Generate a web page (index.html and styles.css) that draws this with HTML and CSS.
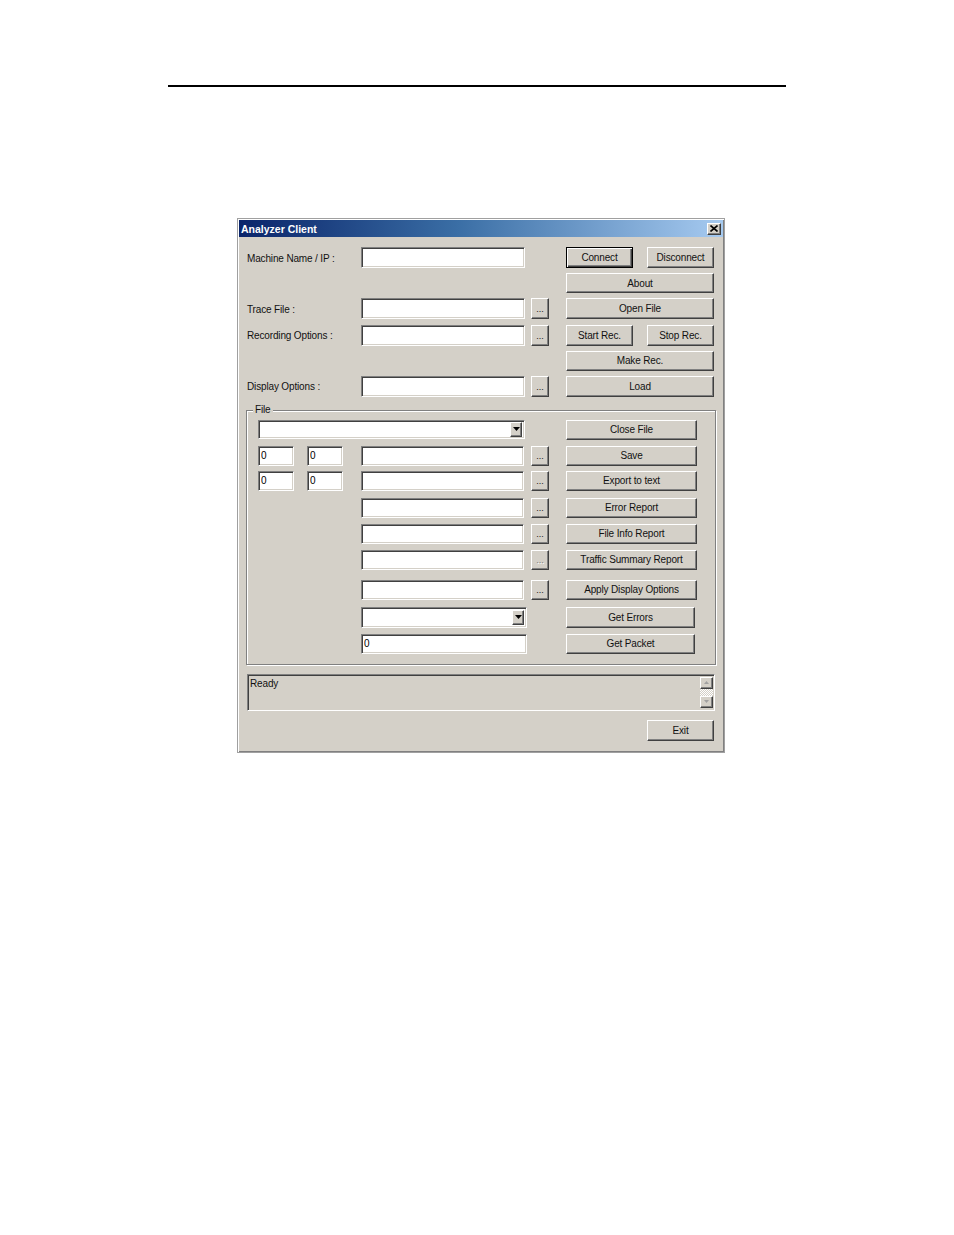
FILE: index.html
```html
<!DOCTYPE html>
<html>
<head>
<meta charset="utf-8">
<title>Analyzer Client</title>
<link rel="stylesheet" href="styles.css">
</head>
<body>
<div class="page">
  <div class="rule"></div>
  <div class="window">
    <div class="titlebar">
      <span class="title">Analyzer Client</span>
      <span class="close"><svg width="8" height="7" viewBox="0 0 8 7"><path d="M0.5 0.5 L7.5 6.5 M7.5 0.5 L0.5 6.5" stroke="#000" stroke-width="1.6" fill="none"/></svg></span>
    </div>
    <div class="body">
      <div class="top">
        <div class="trow">
          <span class="c-lbl">Machine Name / IP :</span>
          <input class="field c-inp" type="text">
          <div class="c-btn pair">
            <button class="btn default half">Connect</button>
            <button class="btn half">Disconnect</button>
          </div>
        </div>
        <div class="trow">
          <button class="btn c-btn short">About</button>
        </div>
        <div class="trow">
          <span class="c-lbl">Trace File :</span>
          <input class="field c-inp" type="text">
          <button class="btn dots c-dots">...</button>
          <button class="btn c-btn">Open File</button>
        </div>
        <div class="trow">
          <span class="c-lbl">Recording Options :</span>
          <input class="field c-inp" type="text">
          <button class="btn dots c-dots">...</button>
          <div class="c-btn pair">
            <button class="btn half">Start Rec.</button>
            <button class="btn half">Stop Rec.</button>
          </div>
        </div>
        <div class="trow">
          <button class="btn c-btn short">Make Rec.</button>
        </div>
        <div class="trow">
          <span class="c-lbl">Display Options :</span>
          <input class="field c-inp" type="text">
          <button class="btn dots c-dots">...</button>
          <button class="btn c-btn">Load</button>
        </div>
      </div>

      <div class="group">
        <span class="legend">File</span>
        <div class="grow">
          <div class="field combo g-combo"><span class="combo-btn"><svg width="7" height="4" viewBox="0 0 7 4"><path d="M0 0 H7 L3.5 4 Z" fill="#000"/></svg></span></div>
          <button class="btn g-btn">Close File</button>
        </div>
        <div class="grow">
          <input class="field g-s1" type="text" value="0">
          <input class="field g-s2" type="text" value="0">
          <input class="field g-big" type="text">
          <button class="btn dots g-dots">...</button>
          <button class="btn g-btn">Save</button>
        </div>
        <div class="grow gap5">
          <input class="field g-s1" type="text" value="0">
          <input class="field g-s2" type="text" value="0">
          <input class="field g-big" type="text">
          <button class="btn dots g-dots">...</button>
          <button class="btn g-btn">Export to text</button>
        </div>
        <div class="grow gap7">
          <input class="field g-big" type="text">
          <button class="btn dots g-dots">...</button>
          <button class="btn g-btn">Error Report</button>
        </div>
        <div class="grow">
          <input class="field g-big" type="text">
          <button class="btn dots g-dots">...</button>
          <button class="btn g-btn">File Info Report</button>
        </div>
        <div class="grow">
          <input class="field g-big" type="text">
          <button class="btn dots g-dots disabled">...</button>
          <button class="btn g-btn">Traffic Summary Report</button>
        </div>
        <div class="grow gap10">
          <input class="field g-big" type="text">
          <button class="btn dots g-dots">...</button>
          <button class="btn g-btn">Apply Display Options</button>
        </div>
        <div class="grow gap7">
          <div class="field combo g-big wide"><span class="combo-btn"><svg width="7" height="4" viewBox="0 0 7 4"><path d="M0 0 H7 L3.5 4 Z" fill="#000"/></svg></span></div>
          <button class="btn g-btn narrow">Get Errors</button>
        </div>
        <div class="grow gap7">
          <input class="field g-big wide" type="text" value="0">
          <button class="btn g-btn narrow">Get Packet</button>
        </div>
      </div>

      <div class="status">
        <span class="status-text">Ready</span>
        <div class="scroll">
          <span class="sb-btn"><svg width="5" height="3" viewBox="0 0 5 3"><path d="M0 3 H5 L2.5 0 Z" fill="#a0a0a0"/></svg></span>
          <span class="sb-track"></span>
          <span class="sb-btn"><svg width="5" height="3" viewBox="0 0 5 3"><path d="M0 0 H5 L2.5 3 Z" fill="#a0a0a0"/></svg></span>
        </div>
      </div>

      <div class="footer">
        <button class="btn exit">Exit</button>
      </div>
    </div>
  </div>
</div>
</body>
</html>
```

FILE: styles.css
```css
* { box-sizing: border-box; }

body {
  margin: 0;
  background: #fff;
  font-family: "Liberation Sans", Arial, sans-serif;
}

.page {
  padding-top: 85px;
}

.rule {
  margin-left: 168px;
  width: 618px;
  height: 2px;
  background: #000;
}

.window {
  margin: 131px 0 0 237px;
  width: 488px;
  height: 535px;
  background: #d4d0c8;
  border: 1px solid #a0a0a0;
  box-shadow: inset 1px 1px 0 #fff, inset -1px -1px 0 #808080;
  padding: 1px;
  font-family: "Liberation Sans", Arial, sans-serif;
  font-size: 10px;
  letter-spacing: -0.15px;
  color: #111;
}

.titlebar {
  height: 17px;
  background: linear-gradient(to right, #0a246a 0%, #3a6ea5 45%, #a6caf0 100%);
  display: flex;
  align-items: center;
  justify-content: space-between;
  padding: 0 2px;
}

.title {
  color: #fff;
  font-weight: bold;
  font-size: 10.5px;
  letter-spacing: 0;
}

.close {
  width: 14px;
  height: 12px;
  background: #d4d0c8;
  border: 1px solid;
  border-color: #fff #404040 #404040 #fff;
  box-shadow: inset -1px -1px 0 #808080;
  display: flex;
  align-items: center;
  justify-content: center;
}

.body {
  padding: 10px 9px 0 8px;
}

/* top section */
.top {
  display: flex;
  flex-direction: column;
  gap: 5.2px;
}

.trow {
  display: grid;
  grid-template-columns: 114px 164px 6px 18px 17px 148px;
  align-items: center;
}

.c-lbl { grid-column: 1; white-space: nowrap; padding-top: 1px; }
.c-inp { grid-column: 2; height: 21px; }
.c-dots { grid-column: 4; height: 21px; }
.c-btn { grid-column: 6; height: 21px; }
.c-btn.short { height: 20px; }

.pair {
  display: flex;
  justify-content: space-between;
}

.half {
  width: 67px;
  height: 21px;
}

/* controls */
.btn {
  background: #d4d0c8;
  border: 1px solid;
  border-color: #fff #404040 #404040 #fff;
  box-shadow: inset -1px -1px 0 #808080;
  font-family: "Liberation Sans", Arial, sans-serif;
  font-size: 10px;
  letter-spacing: -0.15px;
  color: #111;
  display: flex;
  align-items: center;
  justify-content: center;
  padding: 0;
  margin: 0;
  white-space: nowrap;
}

.btn.default {
  border-color: #000;
  box-shadow: inset 1px 1px 0 #fff, inset -1px -1px 0 #404040, inset -2px -2px 0 #808080;
}

.dots {
  align-items: flex-end;
  padding: 0 0 4px;
  font-size: 9px;
  letter-spacing: 0;
}

.dots.disabled {
  color: #808080;
  text-shadow: 1px 1px 0 #fff;
}

.field {
  background: #fff;
  border: 1px solid;
  border-color: #808080 #fff #fff #808080;
  box-shadow: inset 1px 1px 0 #404040, inset -1px -1px 0 #d4d0c8;
  padding: 0 2px;
  margin: 0;
  font-family: "Liberation Sans", Arial, sans-serif;
  font-size: 10px;
  color: #000;
  outline: none;
}

.combo {
  display: flex;
  align-items: center;
  justify-content: flex-end;
  padding: 2px;
}

.combo-btn {
  width: 12px;
  height: 15px;
  background: #d4d0c8;
  border: 1px solid;
  border-color: #fff #404040 #404040 #fff;
  box-shadow: inset -1px -1px 0 #808080;
  display: flex;
  align-items: center;
  justify-content: center;
}

/* group box */
.group {
  position: relative;
  margin: 13px -2px 0 -1px;
  border: 1px solid #808080;
  box-shadow: inset 1px 1px 0 #fff, 1px 1px 0 #fff;
  padding: 9px 0 10px 11px;
}

.legend {
  position: absolute;
  top: -7px;
  left: 6px;
  padding: 0 2px;
  line-height: 12px;
  background: #d4d0c8;
}

.grow {
  display: grid;
  grid-template-columns: 36px 13px 36px 18px 163px 7px 18px 17px 131px;
  height: 20px;
  margin-top: 6px;
}

.grow:first-of-type { margin-top: 0; }
.grow.gap5 { margin-top: 5px; }
.grow.gap10 { margin-top: 10px; }
.grow.gap7 { margin-top: 7px; }

.g-combo { grid-column: 1 / 6; margin-right: -1px; height: 19px; }
.g-s1 { grid-column: 1; }
.g-s2 { grid-column: 3; }
.g-big { grid-column: 5; }
.g-big.wide { width: 166px; }
.g-dots { grid-column: 7; }
.g-btn { grid-column: 9; }
.g-btn.narrow { width: 129px; }

/* status */
.status {
  margin: 9px -1px 0 0;
  height: 37px;
  border: 1px solid;
  border-color: #808080 #fff #fff #808080;
  box-shadow: inset 1px 1px 0 #404040;
  display: flex;
  justify-content: space-between;
  padding: 2px 1px 1px 2px;
}

.status-text {
  line-height: 13px;
}

.scroll {
  width: 13px;
  display: flex;
  flex-direction: column;
}

.sb-btn {
  height: 12px;
  background: #d4d0c8;
  border: 1px solid;
  border-color: #fff #404040 #404040 #fff;
  box-shadow: inset -1px -1px 0 #808080;
  display: flex;
  align-items: center;
  justify-content: center;
}

.sb-track {
  height: 7px;
  background: repeating-conic-gradient(#fff 0 25%, #d4d0c8 0 50%) 0 0 / 2px 2px;
}

.footer {
  display: flex;
  justify-content: flex-end;
  margin-top: 9px;
}

.exit {
  width: 67px;
  height: 21px;
}
```
